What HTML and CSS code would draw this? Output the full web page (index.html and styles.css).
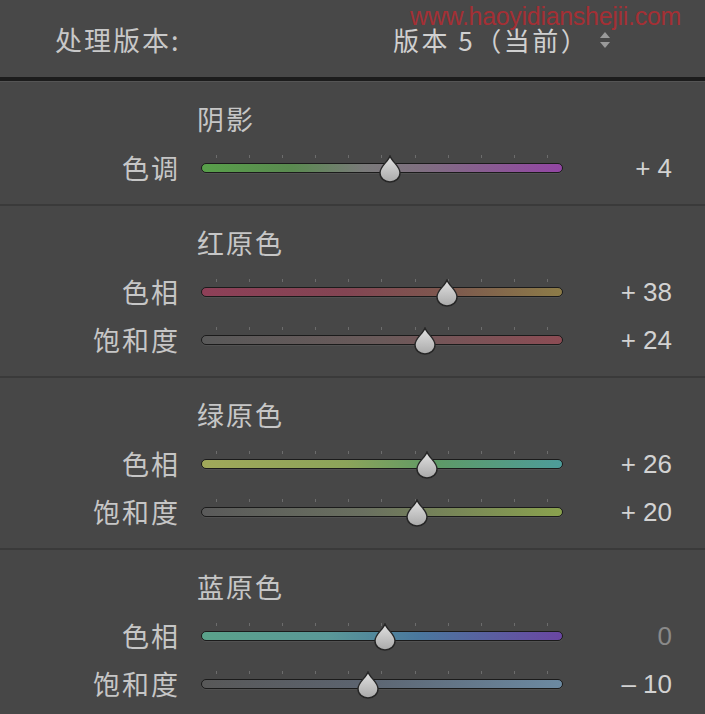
FILE: index.html
```html
<!DOCTYPE html>
<html lang="zh">
<head>
<meta charset="utf-8">
<link rel="stylesheet" href="styles.css">
</head>
<body>
<div class="panel">
  <header class="header">
    <span class="header-label">处理版本:</span>
    <span class="header-value">版本 5（当前）</span>
    <svg class="updown" width="12" height="18" viewBox="0 0 12 18">
      <path d="M6 1 L11 7 L1 7 Z" fill="#9a9a9a"/>
      <path d="M6 17 L11 11 L1 11 Z" fill="#9a9a9a"/>
    </svg>
    <span class="watermark">www.haoyidianshejii.com</span>
  </header>
  <div class="header-border"></div>

  <section class="group">
    <div class="group-title">阴影</div>
    <div class="row">
      <span class="row-label">色调</span>
      <div class="slider">
        <div class="ticks"><i></i><i></i><i></i><i></i><i></i><i></i><i></i><i></i><i></i><i></i><i></i></div>
        <div class="track track-tint"></div>
        <svg class="thumb" style="left:189px" width="22" height="28" viewBox="0 0 22 28"><defs><linearGradient id="tg1" x1="0" y1="0" x2="0" y2="1"><stop offset="0" stop-color="#e2e2e2"/><stop offset="1" stop-color="#a9a9a9"/></linearGradient></defs><path d="M11 1 C13 7 21 11 21 18 A10 9 0 0 1 1 18 C1 11 9 7 11 1 Z" fill="url(#tg1)" stroke="#262626" stroke-width="1.4"/></svg>
      </div>
      <span class="row-value">+ 4</span>
    </div>
  </section>

  <section class="group">
    <div class="group-title">红原色</div>
    <div class="row">
      <span class="row-label">色相</span>
      <div class="slider">
        <div class="ticks"><i></i><i></i><i></i><i></i><i></i><i></i><i></i><i></i><i></i><i></i><i></i></div>
        <div class="track track-red-hue"></div>
        <svg class="thumb" style="left:246px" width="22" height="28" viewBox="0 0 22 28"><path d="M11 1 C13 7 21 11 21 18 A10 9 0 0 1 1 18 C1 11 9 7 11 1 Z" fill="url(#tg1)" stroke="#262626" stroke-width="1.4"/></svg>
      </div>
      <span class="row-value">+ 38</span>
    </div>
    <div class="row">
      <span class="row-label">饱和度</span>
      <div class="slider">
        <div class="ticks"><i></i><i></i><i></i><i></i><i></i><i></i><i></i><i></i><i></i><i></i><i></i></div>
        <div class="track track-red-sat"></div>
        <svg class="thumb" style="left:224px" width="22" height="28" viewBox="0 0 22 28"><path d="M11 1 C13 7 21 11 21 18 A10 9 0 0 1 1 18 C1 11 9 7 11 1 Z" fill="url(#tg1)" stroke="#262626" stroke-width="1.4"/></svg>
      </div>
      <span class="row-value">+ 24</span>
    </div>
  </section>

  <section class="group">
    <div class="group-title">绿原色</div>
    <div class="row">
      <span class="row-label">色相</span>
      <div class="slider">
        <div class="ticks"><i></i><i></i><i></i><i></i><i></i><i></i><i></i><i></i><i></i><i></i><i></i></div>
        <div class="track track-green-hue"></div>
        <svg class="thumb" style="left:226px" width="22" height="28" viewBox="0 0 22 28"><path d="M11 1 C13 7 21 11 21 18 A10 9 0 0 1 1 18 C1 11 9 7 11 1 Z" fill="url(#tg1)" stroke="#262626" stroke-width="1.4"/></svg>
      </div>
      <span class="row-value">+ 26</span>
    </div>
    <div class="row">
      <span class="row-label">饱和度</span>
      <div class="slider">
        <div class="ticks"><i></i><i></i><i></i><i></i><i></i><i></i><i></i><i></i><i></i><i></i><i></i></div>
        <div class="track track-green-sat"></div>
        <svg class="thumb" style="left:216px" width="22" height="28" viewBox="0 0 22 28"><path d="M11 1 C13 7 21 11 21 18 A10 9 0 0 1 1 18 C1 11 9 7 11 1 Z" fill="url(#tg1)" stroke="#262626" stroke-width="1.4"/></svg>
      </div>
      <span class="row-value">+ 20</span>
    </div>
  </section>

  <section class="group">
    <div class="group-title">蓝原色</div>
    <div class="row">
      <span class="row-label">色相</span>
      <div class="slider">
        <div class="ticks"><i></i><i></i><i></i><i></i><i></i><i></i><i></i><i></i><i></i><i></i><i></i></div>
        <div class="track track-blue-hue"></div>
        <svg class="thumb" style="left:184px" width="22" height="28" viewBox="0 0 22 28"><path d="M11 1 C13 7 21 11 21 18 A10 9 0 0 1 1 18 C1 11 9 7 11 1 Z" fill="url(#tg1)" stroke="#262626" stroke-width="1.4"/></svg>
      </div>
      <span class="row-value row-value-zero">0</span>
    </div>
    <div class="row">
      <span class="row-label">饱和度</span>
      <div class="slider">
        <div class="ticks"><i></i><i></i><i></i><i></i><i></i><i></i><i></i><i></i><i></i><i></i><i></i></div>
        <div class="track track-blue-sat"></div>
        <svg class="thumb" style="left:167px" width="22" height="28" viewBox="0 0 22 28"><path d="M11 1 C13 7 21 11 21 18 A10 9 0 0 1 1 18 C1 11 9 7 11 1 Z" fill="url(#tg1)" stroke="#262626" stroke-width="1.4"/></svg>
      </div>
      <span class="row-value">– 10</span>
    </div>
  </section>
</div>
</body>
</html>
```

FILE: styles.css
```css
* { box-sizing: border-box; }

html, body {
  margin: 0;
  padding: 0;
  background: #474747;
}

body {
  font-family: "Noto Sans CJK SC", "Noto Sans", sans-serif;
  color: #c6c6c6;
  width: 705px;
  height: 714px;
  overflow: hidden;
}

.panel {
  display: flex;
  flex-direction: column;
}

.header {
  position: relative;
  height: 77px;
  display: flex;
  align-items: center;
  padding-left: 55px;
  padding-top: 2px;
  background: #484848;
}

.header-label {
  width: 338px;
  font-size: 27px;
  letter-spacing: 2px;
  color: #c8c8c8;
}

.header-value {
  font-size: 26px;
  letter-spacing: 2.5px;
  color: #d0d0d0;
}

.updown {
  margin-left: 10px;
}

.watermark {
  position: absolute;
  left: 410px;
  top: 2px;
  font-family: "Liberation Sans", sans-serif;
  font-size: 25px;
  letter-spacing: -0.3px;
  color: rgba(200, 38, 45, 0.72);
}

.header-border {
  height: 5px;
  background: #1c1c1c;
  border-bottom: 1px solid #555555;
}

.group {
  padding: 21px 0 12px 0;
  border-bottom: 2px solid #3a3a3a;
}

.group:last-child {
  border-bottom: none;
}

.group-title {
  padding-left: 197px;
  height: 32px;
  line-height: 32px;
  font-size: 27px;
  letter-spacing: 2px;
  margin-bottom: 9px;
}

.row {
  height: 48px;
  display: flex;
  align-items: center;
}

.row-label {
  width: 180px;
  text-align: right;
  font-size: 27px;
  letter-spacing: 2px;
  line-height: 32px;
  margin-right: -2px;
}

.slider {
  position: relative;
  margin-left: 23px;
  width: 362px;
  display: flex;
  flex-direction: column;
  padding-bottom: 8px;
}

.ticks {
  height: 3px;
  margin-bottom: 5px;
  padding: 0 15px;
  display: flex;
  justify-content: space-between;
}

.ticks i {
  width: 1px;
  height: 3px;
  background: #6c6c6c;
}

.track {
  height: 10px;
  border: 1.5px solid #1b1b1b;
  border-radius: 5px;
  box-shadow: 0 1px 0 rgba(255,255,255,0.06);
}

.track-tint {
  background: linear-gradient(to right, #58a04a 0%, #5a8a50 25%, #7a7a7a 45%, #7f7080 60%, #9346a4 100%);
}

.track-red-hue {
  background: linear-gradient(to right, #8e4058 0%, #834553 40%, #7d5a4e 70%, #8d7c48 100%);
}

.track-red-sat {
  background: linear-gradient(to right, #595959 0%, #6a5a5a 50%, #8c4c54 100%);
}

.track-green-hue {
  background: linear-gradient(to right, #a1a95a 0%, #8ca45a 40%, #5e9a66 65%, #4d9c9a 100%);
}

.track-green-sat {
  background: linear-gradient(to right, #5a5a5a 0%, #6a7060 45%, #8aa24e 100%);
}

.track-blue-hue {
  background: linear-gradient(to right, #5aa28a 0%, #5a9898 35%, #4a789e 60%, #6a46a2 100%);
}

.track-blue-sat {
  background: linear-gradient(to right, #585858 0%, #5c6470 45%, #6c8aa2 100%);
}

.thumb {
  position: absolute;
  top: 0;
  margin-left: -11px;
}

.row-value {
  width: 109px;
  text-align: right;
  font-family: "Liberation Sans", sans-serif;
  font-size: 26px;
  color: #d2d2d2;
}

.row-value-zero {
  color: #8a8a8a;
}
```
